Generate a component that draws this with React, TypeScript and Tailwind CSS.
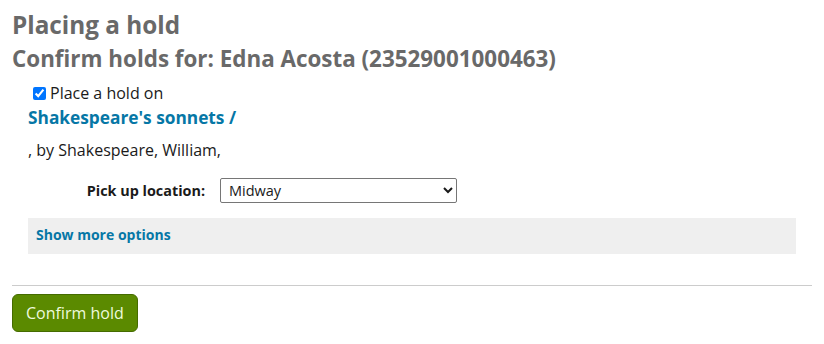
import { useState } from 'react';

export default function App() {
  const [checked, setChecked] = useState(true);
  const [branch, setBranch] = useState('Midway');

  return (
    <div className="w-[824px] h-[344px] bg-white px-3 pt-[9px] font-['Open_Sans',sans-serif] text-[#1a1a1a]">
      {/* Headings */}
      <h1 className="text-[24.3px] leading-[32px] font-bold text-[#696969]">Placing a hold</h1>
      <h2 className="mt-[3px] text-[22.4px] leading-[30px] font-bold text-[#696969]">
        Confirm holds for: Edna Acosta (23529001000463)
      </h2>

      {/* Hold item */}
      <div className="mt-[9px] pl-4">
        <label className="flex items-center gap-[4px] pl-[5px] text-[16px] leading-[20px]">
          <input
            type="checkbox"
            checked={checked}
            onChange={(e) => setChecked(e.target.checked)}
            className="w-[13px] h-[13px] accent-[#0075ff]"
          />
          Place a hold on
        </label>
        <a href="#" className="block mt-[3px] text-[17.3px] leading-[24px] font-bold text-[#0677a6]">
          Shakespeare's sonnets /
        </a>
        <p className="mt-[9px] text-[16px] leading-[22px]">, by Shakespeare, William,</p>

        <div className="mt-[17px] flex items-center">
          <span className="w-[192px] pr-[15px] text-right text-[14.4px] font-bold">Pick up location:</span>
          <select
            value={branch}
            onChange={(e) => setBranch(e.target.value)}
            className="w-[237px] h-[25px] border border-[#767676] rounded-[2px] bg-white pl-[4px] text-[14.5px] font-['Open_Sans',sans-serif] appearance-auto"
          >
            <option>Midway</option>
            <option>Centerville</option>
            <option>Fairview</option>
          </select>
        </div>

        <div className="mt-[15px] mr-[16px] bg-[#efefef] h-[36px] flex items-center px-2">
          <a href="#" className="text-[14px] leading-[20px] font-bold text-[#0677a6] -mt-[2px]">
            Show more options
          </a>
        </div>
      </div>

      <hr className="mt-[31px] border-0 border-t border-[#cccccc]" />

      <button className="mt-[8px] h-[38px] px-[13px] rounded-[6px] border border-[#456b00] bg-[#5b8a00] text-[#eefadd] text-[16px]">
        Confirm hold
      </button>
    </div>
  );
}
